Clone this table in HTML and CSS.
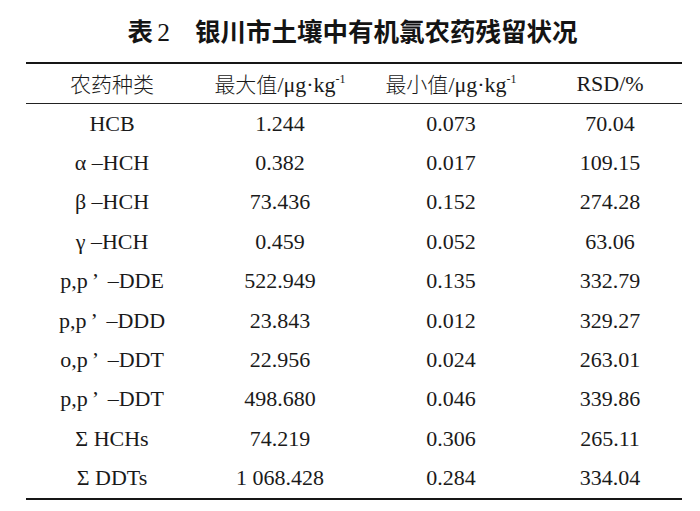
FILE: index.html
```html
<!DOCTYPE html>
<html>
<head>
<meta charset="utf-8">
<title>表2 银川市土壤中有机氯农药残留状况</title>
<link rel="stylesheet" href="styles.css">
</head>
<body>
<div class="page">
  <h1 class="title"><span class="t-label">表</span><span class="t-num">2</span><span class="t-text">银川市土壤中有机氯农药残留状况</span></h1>
  <div class="table">
    <div class="row head">
      <div class="cell"><span class="cjk">农药种类</span></div>
      <div class="cell"><span class="cjk">最大值</span>/μg·kg<sup class="sup">-1</sup></div>
      <div class="cell"><span class="cjk">最小值</span>/μg·kg<sup class="sup">-1</sup></div>
      <div class="cell c4">RSD/%</div>
    </div>
    <div class="body">
      <div class="row"><div class="cell">HCB</div><div class="cell">1.244</div><div class="cell">0.073</div><div class="cell c4">70.04</div></div>
      <div class="row"><div class="cell">α –HCH</div><div class="cell">0.382</div><div class="cell">0.017</div><div class="cell c4">109.15</div></div>
      <div class="row"><div class="cell">β –HCH</div><div class="cell">73.436</div><div class="cell">0.152</div><div class="cell c4">274.28</div></div>
      <div class="row"><div class="cell">γ –HCH</div><div class="cell">0.459</div><div class="cell">0.052</div><div class="cell c4">63.06</div></div>
      <div class="row"><div class="cell">p,p<span class="q">’</span>–DDE</div><div class="cell">522.949</div><div class="cell">0.135</div><div class="cell c4">332.79</div></div>
      <div class="row"><div class="cell">p,p<span class="q">’</span>–DDD</div><div class="cell">23.843</div><div class="cell">0.012</div><div class="cell c4">329.27</div></div>
      <div class="row"><div class="cell">o,p<span class="q">’</span>–DDT</div><div class="cell">22.956</div><div class="cell">0.024</div><div class="cell c4">263.01</div></div>
      <div class="row"><div class="cell">p,p<span class="q">’</span>–DDT</div><div class="cell">498.680</div><div class="cell">0.046</div><div class="cell c4">339.86</div></div>
      <div class="row"><div class="cell">Σ HCHs</div><div class="cell">74.219</div><div class="cell">0.306</div><div class="cell c4">265.11</div></div>
      <div class="row"><div class="cell">Σ DDTs</div><div class="cell">1 068.428</div><div class="cell">0.284</div><div class="cell c4">334.04</div></div>
    </div>
  </div>
</div>
</body>
</html>
```
FILE: styles.css
```css
html, body {
  margin: 0;
  padding: 0;
  background: #ffffff;
}

.page {
  width: 700px;
  height: 511px;
  padding-top: 12px;
  box-sizing: border-box;
  color: #1a1a1a;
}

.title {
  margin: 0 0 14px 0;
  height: 36px;
  line-height: 36px;
  text-align: center;
  font-family: "Noto Sans CJK SC", sans-serif;
  font-weight: 700;
  font-size: 25.5px;
  white-space: nowrap;
  padding-left: 5px;
  color: #141414;
}

.t-num {
  font-family: "Liberation Serif", serif;
  font-weight: 400;
  margin-left: 4px;
  margin-right: 25px;
}

.table {
  margin-left: 26px;
  width: 656px;
  border-top: 2px solid #161616;
  border-bottom: 2px solid #161616;
  font-family: "Liberation Serif", "Times New Roman", serif;
  font-size: 22px;
}

.row {
  display: grid;
  grid-template-columns: 172px 164px 178px 142px;
  height: 39.4px;
  align-items: center;
}

.row.head {
  height: 39px;
  border-bottom: 1px solid #222;
}

.cell {
  text-align: center;
  white-space: nowrap;
  line-height: 24px;
}

.c4 {
  padding-right: 2px;
}

.cjk {
  font-family: "Noto Sans CJK SC", sans-serif;
  font-weight: 300;
  font-size: 21px;
}

.sup {
  font-size: 12px;
  line-height: 0;
  vertical-align: 9px;
}

.q {
  display: inline-block;
  width: 20px;
  text-align: left;
  padding-left: 4px;
  box-sizing: border-box;
}
```
